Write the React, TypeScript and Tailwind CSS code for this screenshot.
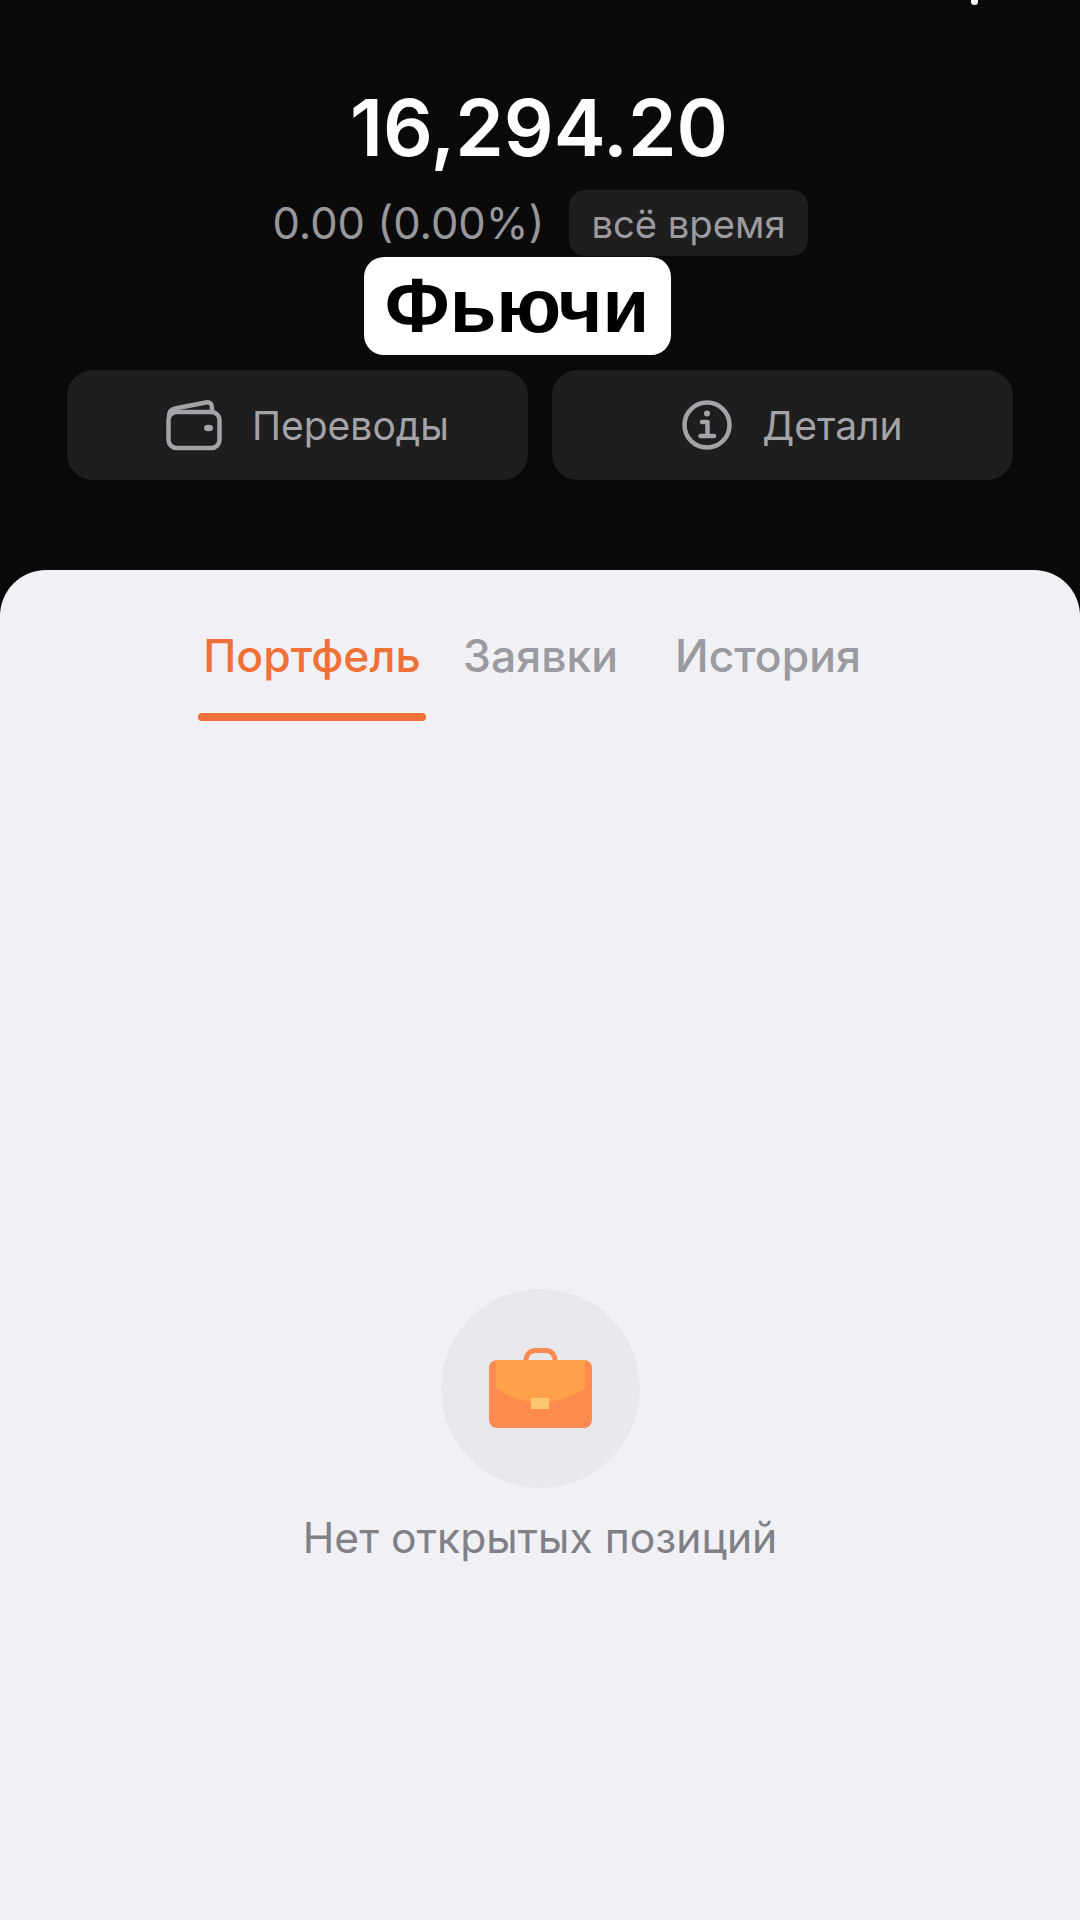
import React from "react";

const Wallet = () => (
  <svg width="56" height="52" viewBox="0 0 56 52" fill="none" stroke="#a3a3a8" strokeWidth="4.5" strokeLinejoin="round" strokeLinecap="round">
    <path d="M3 18C3 12 6 10 10 9.300L40 3.500C44 2.800 46 5 46 9V13" />
    <rect x="2.500" y="13" width="51" height="36" rx="8" />
    <ellipse cx="42.500" cy="29" rx="4.500" ry="3.200" fill="#a3a3a8" stroke="none" />
  </svg>
);

const Info = () => (
  <svg width="50" height="50" viewBox="0 0 50 50" fill="none" stroke="#a3a3a8" strokeWidth="4.500" strokeLinecap="round" strokeLinejoin="round">
    <circle cx="25" cy="25" r="22.500" />
    <circle cx="25" cy="13.500" r="3" fill="#a3a3a8" stroke="none" />
    <path d="M20 22H25.500V36M18.500 36H32" />
  </svg>
);

const Briefcase = () => (
  <svg width="103" height="80" viewBox="0 0 103 80" fill="none" className="ml-[1px] mt-[-2px]">
    <path d="M37 16V13C37 6 41 2.500 47 2.500H56C62 2.500 66 6 66 13V16" stroke="#f98a50" strokeWidth="5" />
    <rect x="0" y="12" width="103" height="68" rx="8" fill="#fd8a4e" />
    <path d="M7 12H96V40C80 51 66 54 51 54C36 54 22 51 7 40Z" fill="#fea148" />
    <rect x="42" y="50" width="18" height="11" rx="1" fill="#fdc671" />
  </svg>
);

const ActionButton = ({ icon, label }: { icon: React.ReactNode; label: string }) => (
  <div className="flex h-[110px] flex-1 items-center justify-center gap-[30px] rounded-[26px] bg-[#1e1e1f] pl-[20px]">
    {icon}
    <span className="text-[39px] leading-none text-[#a3a3a8]">{label}</span>
  </div>
);

export default function App() {
  return (
    <div className="relative flex h-[1920px] w-[1080px] flex-col overflow-hidden bg-[#0a0a0b] font-['Inter','Noto_Sans',sans-serif]">
      <div className="absolute left-[971px] top-0 h-[5px] w-[7px] rounded-b-full bg-white" />

      <header className="flex h-[570px] flex-col items-center pt-[90px]">
        <div className="ml-[-2px] text-[78px] font-semibold leading-[76px] text-white">16,294.20</div>
        <div className="mt-[24px] flex items-center gap-[25px]">
          <span className="pt-[2px] text-[43.500px] leading-none text-[#98989c]">0.00 (0.00%)</span>
          <span className="flex h-[66px] items-center rounded-[16px] bg-[#1e1e1f] px-[22px] pt-[2px] text-[38.200px] leading-none text-[#9a9a9f]">всё время</span>
        </div>
        <div className="ml-[-46px] mt-[1px] flex h-[98px] w-[307px] items-center justify-center rounded-[20px] bg-white font-['Liberation_Sans',sans-serif] text-[76px] font-bold leading-none text-black">
          Фьючи
        </div>
        <div className="mt-[15px] flex w-full gap-[24px] px-[67px]">
          <ActionButton icon={<Wallet />} label="Переводы" />
          <ActionButton icon={<Info />} label="Детали" />
        </div>
      </header>

      <main className="flex flex-1 flex-col rounded-t-[46px] bg-[#f0f0f5]">
        <nav className="flex h-[151px] items-start pl-[198px]">
          <div className="flex h-full w-[228px] flex-col items-center pt-[62px]">
            <span className="text-[44.500px] font-medium leading-[48px] text-[#f07138]">Портфель</span>
            <span className="mt-[33px] h-[8px] w-full rounded-full bg-[#f07138]" />
          </div>
          <span className="ml-[37px] pt-[62px] text-[44.500px] font-medium leading-[48px] text-[#9a9aa0]">Заявки</span>
          <span className="ml-[57px] pt-[62px] text-[44.500px] font-medium leading-[48px] text-[#9a9aa0]">История</span>
        </nav>
        <div className="flex flex-col items-center pt-[568px]">
          <div className="flex h-[199px] w-[199px] items-center justify-center rounded-full bg-[#e7e7ec]">
            <Briefcase />
          </div>
          <p className="mt-[26px] text-[42.600px] leading-[48px] text-[#808086]">Нет открытых позиций</p>
        </div>
      </main>
    </div>
  );
}
